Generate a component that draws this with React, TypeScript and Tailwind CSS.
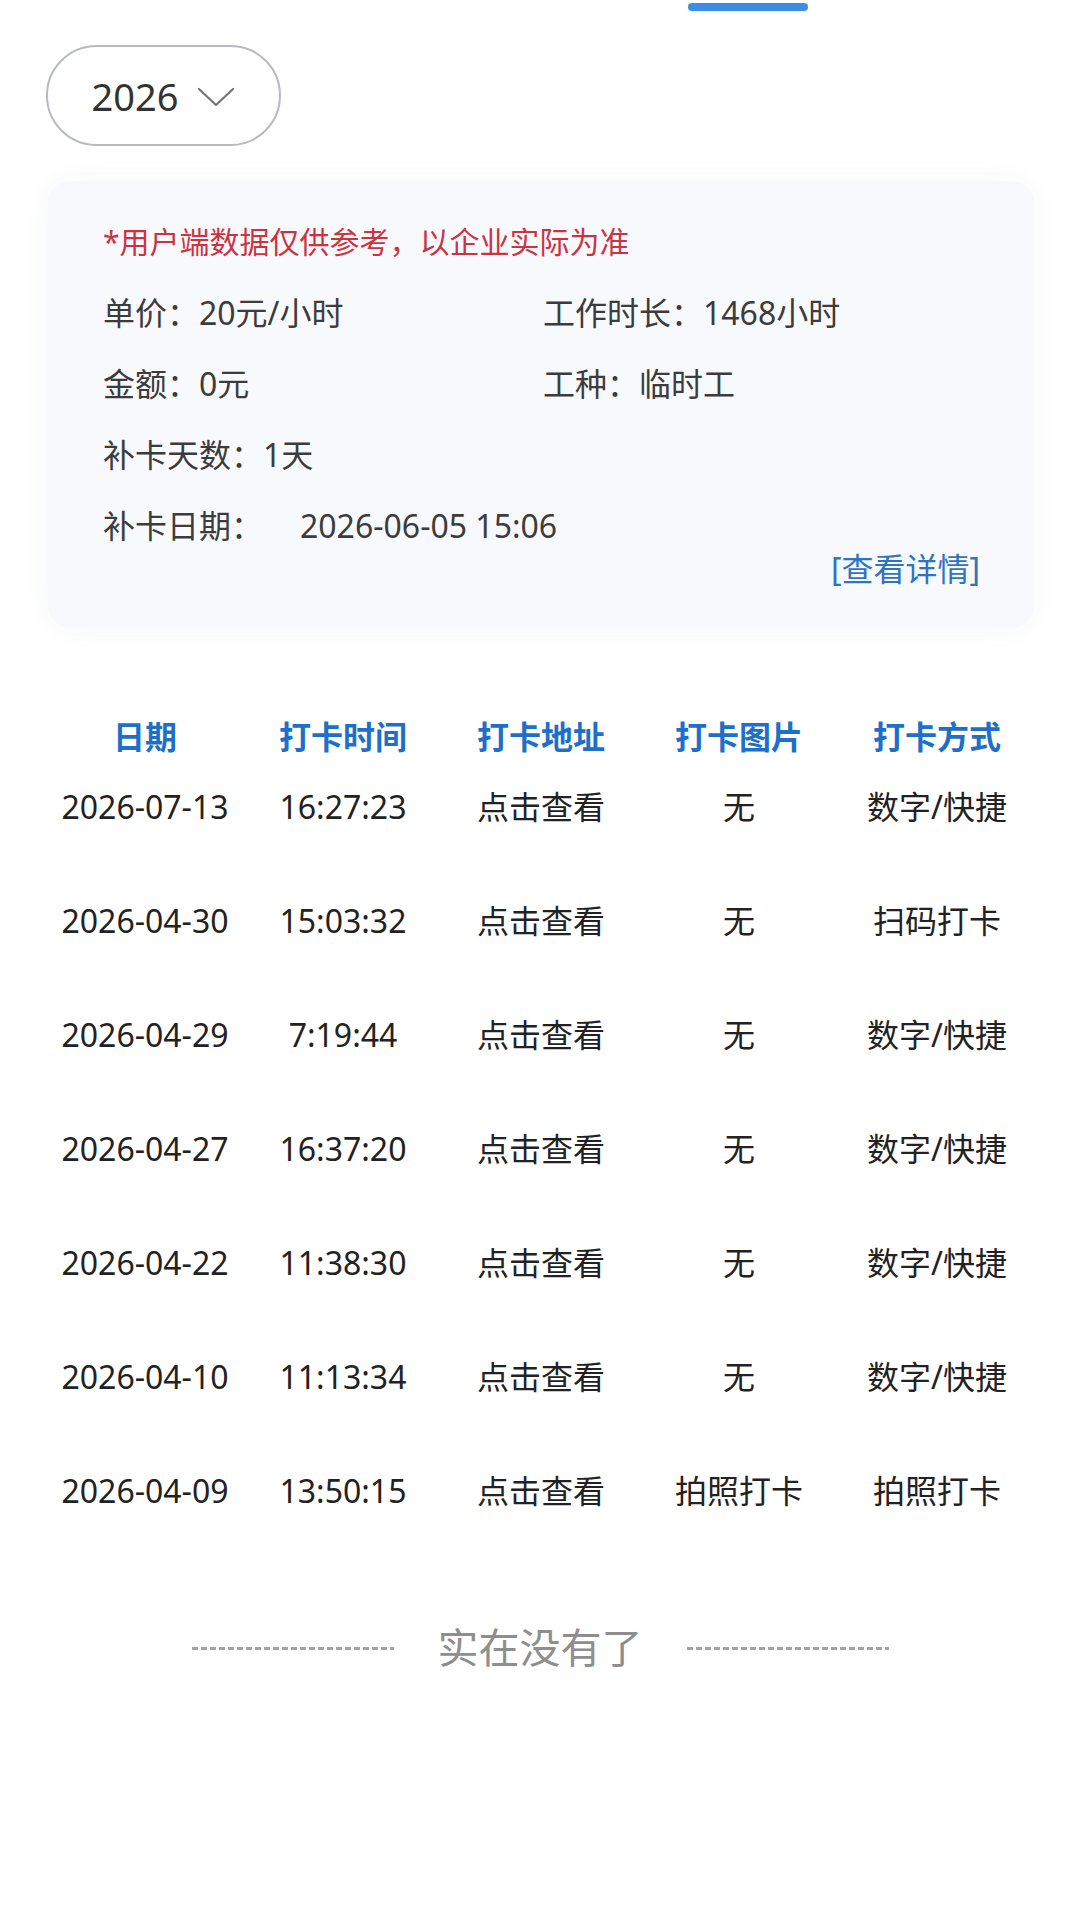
import React from "react";

const rows = [
  { date: "2026-07-13", time: "16:27:23", addr: "点击查看", pic: "无", way: "数字/快捷" },
  { date: "2026-04-30", time: "15:03:32", addr: "点击查看", pic: "无", way: "扫码打卡" },
  { date: "2026-04-29", time: "7:19:44", addr: "点击查看", pic: "无", way: "数字/快捷" },
  { date: "2026-04-27", time: "16:37:20", addr: "点击查看", pic: "无", way: "数字/快捷" },
  { date: "2026-04-22", time: "11:38:30", addr: "点击查看", pic: "无", way: "数字/快捷" },
  { date: "2026-04-10", time: "11:13:34", addr: "点击查看", pic: "无", way: "数字/快捷" },
  { date: "2026-04-09", time: "13:50:15", addr: "点击查看", pic: "拍照打卡", way: "拍照打卡" },
];

const headers = ["日期", "打卡时间", "打卡地址", "打卡图片", "打卡方式"];

function Dashes() {
  return (
    <div className="w-[202px] h-[3px] bg-[repeating-linear-gradient(90deg,#a3a3a3_0_6px,transparent_6px_9px)]" />
  );
}

export default function App() {
  return (
    <div
      className="w-[1080px] min-h-[1920px] bg-white flex flex-col"
      style={{ fontFamily: '"Noto Sans", "Noto Sans CJK SC", sans-serif' }}
    >
      {/* tab indicator */}
      <div className="pl-[688px] pt-[3px]">
        <div className="w-[120px] h-[8px] rounded-full bg-[#3b8ee8]" />
      </div>

      {/* year picker */}
      <div className="ml-[46px] mt-[34px] w-[235px] h-[101px] rounded-full border-2 border-[#b7babf] flex items-center justify-center gap-[19px]">
        <span className="text-[38px] leading-none text-[#333]">2026</span>
        <svg width="38" height="20" viewBox="0 0 38 20" className="mt-[2px]">
          <polyline points="2,2 19,18 36,2" fill="none" stroke="#767676" strokeWidth="2.2" strokeLinecap="round" strokeLinejoin="round" />
        </svg>
      </div>

      {/* summary card */}
      <div className="ml-[48px] mt-[35px] w-[986px] rounded-[22px] bg-[#f8f9fc] shadow-[0_0_30px_rgba(40,60,120,0.045)] pt-[25px] pb-[39px] pl-[55px] pr-[54px]">
        <div className="h-[71px] flex items-center text-[30px] text-[#cc3340]">
          *用户端数据仅供参考，以企业实际为准
        </div>
        <div className="h-[71px] flex items-center text-[32px] text-[#3c3c3c]">
          <span className="w-[440px]">单价：20元/小时</span>
          <span>工作时长：1468小时</span>
        </div>
        <div className="h-[71px] flex items-center text-[32px] text-[#3c3c3c]">
          <span className="w-[440px]">金额：0元</span>
          <span>工种：临时工</span>
        </div>
        <div className="h-[71px] flex items-center text-[32px] text-[#3c3c3c]">
          <span>补卡天数：1天</span>
        </div>
        <div className="h-[71px] flex items-center text-[32px] text-[#3c3c3c]">
          <span className="w-[197px]">补卡日期：</span>
          <span>2026-06-05 15:06</span>
        </div>
        <div className="-mt-[12px] h-[40px] flex justify-end items-center text-[32px] text-[#2f73c4]">
          [查看详情]
        </div>
      </div>

      {/* records table */}
      <div className="ml-[46px] mt-[74px] w-[990px]">
        <div className="grid grid-cols-5 h-[70px] items-center text-center text-[32px] font-bold text-[#1d6fc9]">
          {headers.map((h) => (
            <div key={h}>{h}</div>
          ))}
        </div>
        {rows.map((r) => (
          <div key={r.date} className="grid grid-cols-5 h-[114px] text-center text-[32px] leading-[70px] text-[#222]">
            <div>{r.date}</div>
            <div>{r.time}</div>
            <div>{r.addr}</div>
            <div>{r.pic}</div>
            <div>{r.way}</div>
          </div>
        ))}
      </div>

      {/* end of list */}
      <div className="mt-[38px] h-[80px] flex items-center justify-center gap-[44px]">
        <Dashes />
        <span className="text-[41px] text-[#8e8e8e]">实在没有了</span>
        <Dashes />
      </div>
    </div>
  );
}
